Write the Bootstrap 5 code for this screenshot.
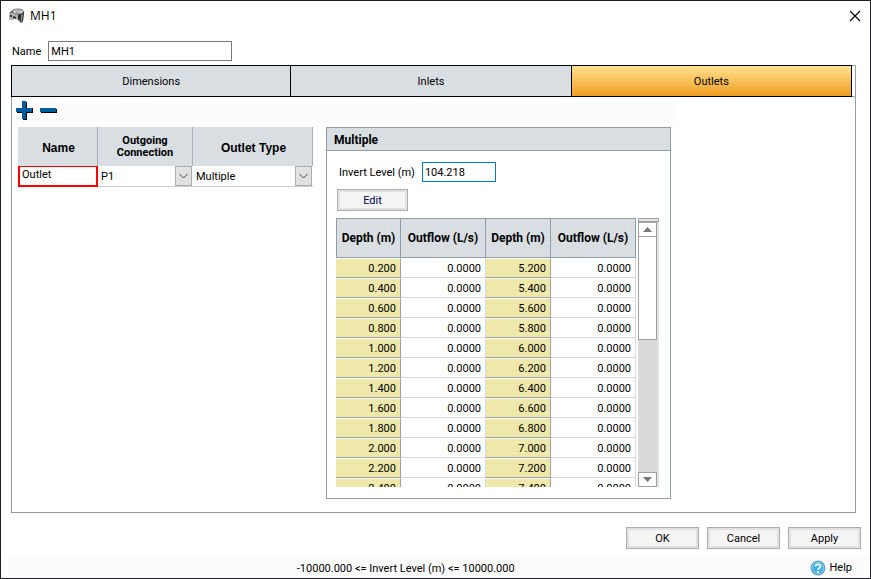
<!DOCTYPE html>
<html lang="en">
<head>
<meta charset="utf-8">
<meta name="viewport" content="width=device-width, initial-scale=1">
<title>MH1</title>
<link href="https://cdn.jsdelivr.net/npm/bootstrap@5.3.0/dist/css/bootstrap.min.css" rel="stylesheet">
<style>
  :root { --line: #929ea5; --head: #d9dee2; --soft: #fcfcfc; }
  body { font: 11px/14px Roboto, "Liberation Sans", Arial, sans-serif; color: #000; background: #fff; }
  .win { height: 100vh; min-height: 400px; border: 1px solid #1e1f24; }
  .win-title { height: 29px; padding: 0 9px 0 7px; gap: 5px; }
  .win-title h1 { font: 12px/16px "Open Sans", sans-serif; }
  .win-close { width: 12px; height: 12px; }
  .name-row { padding: 11px 11px 4px; gap: 7px; }
  .name-row label, .level-row label { padding-top: 2px; }
  .field { height: 20px; padding: 0 2px; border: 1px solid #7a7a7a; border-radius: 0; font-size: 11px; line-height: 14px; color: #000; background: #fff; }
  .field-name { width: 184px; }
  .field-level { width: 74px; border-color: #0078d7; }
  .page-frame { min-height: 0; margin: 0 14px 0 10px; border: 1px solid var(--line); border-top: 0; }
  .tab-strip { margin: 0 0 0 -1px; padding-right: 3px; border-top: 1px solid var(--line); border-bottom: 1px solid var(--line); height: 32px; }
  .tab-strip .nav-link { height: 32px; margin: -1px 0 0; padding: 2px 0 0; border: 1px solid #000; border-radius: 0; background: var(--head); color: #000; font-size: 11px; }
  .tab-strip .nav-item + .nav-item .nav-link { border-left: 0; }
  .tab-strip .nav-link.active { background: linear-gradient(#ffe28f, #f09d22); }
  .tools { width: 664px; max-width: 100%; height: 25px; padding: 2px 4px 0; gap: 6px; background: var(--soft); }
  .panes { padding: 5px 6px 13px; gap: 13px; }
  .outlets { width: 295px; table-layout: fixed; border-collapse: separate; border-spacing: 0; }
  .outlets th { height: 39px; padding: 2px 2px 0 4px; background: var(--head); border-right: 1px solid #a9b0b5; font: bold 12px/12px "Liberation Sans", Arial, sans-serif; }
  .outlets th.tight { padding: 0 4px; font: bold 11px/12px Roboto, sans-serif; }
  .outlets td { height: 21px; padding: 0; border-bottom: 1px solid #ccc; }
  .outlets td.bad { border: 2px solid #f00; border-top-width: 1px; vertical-align: top; padding: 1px 0 0 2px; }
  .pick { height: 20px; width: 100%; padding: 1px 20px 0 3px; border: 0; border-radius: 0; color: #000; font-size: 11px; line-height: 14px; appearance: none; background: transparent; }
  .pick-arrow { right: 1px; top: 0; width: 17px; height: 20px; pointer-events: none; background: #e1e1e1; border: 1px solid #adadad; }
  .detail { width: 345px; border: 1px solid var(--line); }
  .detail h2 { height: 23px; padding: 0 7px; margin: 0; background: var(--head); border-bottom: 1px solid var(--line); font: bold 12px/24px Roboto, sans-serif; }
  .level-row { padding: 11px 12px 7px; gap: 7px; }
  .push { height: 22px; padding: 1px 0 0; border: 1px solid #adadad; border-radius: 0; box-shadow: inset 0 0 0 2px #e1e1e1; background: #f4f4f4; color: #000; font-size: 11px; line-height: 14px; }
  .push-edit { width: 71px; margin-left: 10px; color: #000050; }
  .push-main { width: 73px; }
  .curve-wrap { margin: 7px 11px 11px 9px; gap: 2px; }
  .curve { width: 300px; table-layout: fixed; border-collapse: separate; border-spacing: 0; }
  .curve th { height: 40px; padding: 0; background: var(--head); border: 1px solid var(--line); border-left: 0; white-space: nowrap; font-size: 12px; }
  .curve th:first-child { border-left: 1px solid var(--line); }
  .curve td { height: 20px; padding: 2px 4px 0 0; border-right: 1px solid #d5dadf; border-bottom: 1px solid #d5dadf; text-align: right; line-height: 16px; }
  .curve td.depth { padding-top: 1px; background: #eee8aa; border-color: #a0a0a0; border-top: 1px solid #fff; }
  .bar { width: 21px; border-right: 2px solid #e3e3e3; background: #dadada; }
  .bar-top { height: 4px; border: 1px solid #a0a0a0; background: #e3e3e3; margin-right: -2px; }
  .bar-btn { height: 15px; padding: 0; border: 1px solid #a0a0a0; background: #fff; }
  .bar-thumb { height: 103px; border: 1px solid #a0a0a0; background: #fff; border-top: 0; }
  .actions { padding: 14px 9px 7px; gap: 8px; }
  .status { height: 22px; padding: 2px 18px 0 0; background: var(--soft); }
  .status-text { padding-top: 1px; }
  .help { gap: 3px; color: #000; font-size: 11px; }
</style>
<script src="https://cdn.jsdelivr.net/npm/bootstrap@5.3.0/dist/js/bootstrap.bundle.min.js"></script>
</head>
<body>
<main class="win d-flex flex-column overflow-hidden">
  <header class="win-title d-flex align-items-center flex-shrink-0">
    <svg width="17" height="16" viewBox="0 0 17 16" aria-hidden="true">
      <path d="M1 5 6 1h8l2 3-1 9-2 2-3-3-4-2-1 2-4-1z" fill="#666"/>
      <path d="M1 5h4l5 2v5l-4-2-1 2-4-1z" fill="#b5b5b5"/>
      <path d="m10 7 6-3-1 9-2 2-1-4-2 1z" fill="#2b2b2b"/>
      <path d="m13 7 2-1-1 7-1 1z" fill="#8c8c8c"/>
      <ellipse cx="10" cy="3.500" rx="5" ry="2.500" fill="#ddd" stroke="#777"/>
      <path d="m7 3 5 2M9 2l4 1M8 5l3-3" stroke="#999" fill="none"/>
      <path d="M2 8h2M5 9l3 1" stroke="#333" stroke-width="2" fill="none"/>
    </svg>
    <h1 class="m-0 flex-grow-1">MH1</h1>
    <button type="button" class="win-close btn p-0 border-0 d-flex" aria-label="Close">
      <svg width="12" height="12" viewBox="0 0 12 12"><path d="m1 1 10 10M11 1 1 11" stroke="#000" stroke-width="1.100"/></svg>
    </button>
  </header>

  <div class="name-row d-flex align-items-center flex-shrink-0">
    <label for="node-name">Name</label>
    <input id="node-name" class="field field-name" type="text" value="MH1">
  </div>

  <section class="page-frame d-flex flex-column flex-grow-1">
    <ul class="tab-strip nav flex-nowrap flex-shrink-0" role="tablist">
      <li class="nav-item col" role="presentation"><button type="button" class="nav-link w-100" role="tab" aria-selected="false">Dimensions</button></li>
      <li class="nav-item col" role="presentation"><button type="button" class="nav-link w-100" role="tab" aria-selected="false">Inlets</button></li>
      <li class="nav-item col" role="presentation"><button type="button" class="nav-link w-100 active" role="tab" aria-selected="true">Outlets</button></li>
    </ul>
    <div class="tools d-flex align-items-center flex-shrink-0">
      <button type="button" class="btn p-0 border-0 d-flex" aria-label="Add outlet">
        <svg width="18" height="19" viewBox="0 0 18 19"><path d="M7 1h4v6h6v5h-6v7H7v-7H1V7h6z" fill="#000"/><path d="M6 0h4v7h6v4h-6v7H6v-7H0V7h6z" fill="#005a9c"/></svg>
      </button>
      <button type="button" class="btn p-0 border-0 d-flex" aria-label="Remove outlet">
        <svg width="18" height="19" viewBox="0 0 18 19"><path d="M1 8h16v4H1z" fill="#000"/><path d="M0 7h16v4H0z" fill="#005a9c"/></svg>
      </button>
    </div>

    <div class="panes d-flex flex-grow-1 overflow-hidden">
      <div class="flex-shrink-0">
        <table class="outlets">
          <colgroup><col width="80"><col width="95"><col width="120"></colgroup>
          <thead><tr class="text-center">
            <th scope="col">Name</th><th scope="col" class="tight">Outgoing Connection</th><th scope="col">Outlet Type</th>
          </tr></thead>
          <tbody><tr>
            <td class="bad">Outlet</td>
            <td><div class="position-relative">
              <select class="pick" aria-label="Outgoing Connection"><option>P1</option></select>
              <span class="pick-arrow position-absolute d-flex align-items-center justify-content-center"><svg width="9" height="6" viewBox="0 0 9 6"><path d="m.5 1 4 4 4-4" fill="none" stroke="#444"/></svg></span>
            </div></td>
            <td><div class="position-relative">
              <select class="pick" aria-label="Outlet Type"><option>Multiple</option></select>
              <span class="pick-arrow position-absolute d-flex align-items-center justify-content-center"><svg width="9" height="6" viewBox="0 0 9 6"><path d="m.5 1 4 4 4-4" fill="none" stroke="#444"/></svg></span>
            </div></td>
          </tr></tbody>
        </table>
      </div>

      <section class="detail d-flex flex-column">
        <h2 class="flex-shrink-0">Multiple</h2>
        <div class="level-row d-flex align-items-center">
          <label for="level">Invert Level (m)</label>
          <input id="level" class="field field-level" type="text" value="104.218">
        </div>
        <button type="button" class="btn push push-edit flex-shrink-0">Edit</button>
        <div class="curve-wrap d-flex flex-grow-1 overflow-hidden">
          <div class="overflow-hidden">
            <table class="curve">
              <colgroup><col width="65"><col width="85"><col width="65"><col width="85"></colgroup>
              <thead><tr class="text-center"><th scope="col">Depth (m)</th><th scope="col">Outflow (L/s)</th><th scope="col">Depth (m)</th><th scope="col">Outflow (L/s)</th></tr></thead>
              <tbody>
                <tr><td class="depth">0.200</td><td>0.0000</td><td class="depth">5.200</td><td>0.0000</td></tr>
                <tr><td class="depth">0.400</td><td>0.0000</td><td class="depth">5.400</td><td>0.0000</td></tr>
                <tr><td class="depth">0.600</td><td>0.0000</td><td class="depth">5.600</td><td>0.0000</td></tr>
                <tr><td class="depth">0.800</td><td>0.0000</td><td class="depth">5.800</td><td>0.0000</td></tr>
                <tr><td class="depth">1.000</td><td>0.0000</td><td class="depth">6.000</td><td>0.0000</td></tr>
                <tr><td class="depth">1.200</td><td>0.0000</td><td class="depth">6.200</td><td>0.0000</td></tr>
                <tr><td class="depth">1.400</td><td>0.0000</td><td class="depth">6.400</td><td>0.0000</td></tr>
                <tr><td class="depth">1.600</td><td>0.0000</td><td class="depth">6.600</td><td>0.0000</td></tr>
                <tr><td class="depth">1.800</td><td>0.0000</td><td class="depth">6.800</td><td>0.0000</td></tr>
                <tr><td class="depth">2.000</td><td>0.0000</td><td class="depth">7.000</td><td>0.0000</td></tr>
                <tr><td class="depth">2.200</td><td>0.0000</td><td class="depth">7.200</td><td>0.0000</td></tr>
                <tr><td class="depth">2.400</td><td>0.0000</td><td class="depth">7.400</td><td>0.0000</td></tr>
              </tbody>
            </table>
          </div>
          <div class="bar d-flex flex-column flex-shrink-0">
            <div class="bar-top flex-shrink-0"></div>
            <button type="button" class="bar-btn d-flex align-items-center justify-content-center flex-shrink-0" aria-label="Scroll up"><svg width="9" height="5" viewBox="0 0 9 5"><path d="M0 5h9L4.500 0z" fill="#777"/></svg></button>
            <div class="bar-thumb"></div>
            <button type="button" class="bar-btn d-flex align-items-center justify-content-center mt-auto flex-shrink-0" aria-label="Scroll down"><svg width="9" height="5" viewBox="0 0 9 5"><path d="M0 0h9L4.500 5z" fill="#777"/></svg></button>
          </div>
        </div>
      </section>
    </div>
  </section>

  <div class="actions d-flex justify-content-end flex-shrink-0">
    <button type="button" class="btn push push-main">OK</button>
    <button type="button" class="btn push push-main">Cancel</button>
    <button type="button" class="btn push push-main">Apply</button>
  </div>
  <footer class="status d-flex align-items-center flex-shrink-0">
    <div class="status-text flex-grow-1 text-center">-10000.000 &lt;= Invert Level (m) &lt;= 10000.000</div>
    <a href="#" class="help d-flex align-items-center text-decoration-none">
      <svg width="16" height="16" viewBox="0 0 16 16" aria-hidden="true"><circle cx="8" cy="8" r="7" fill="#3fb0e6" stroke="#5d93b0"/><circle cx="8" cy="8" r="5.800" fill="none" stroke="#8fd3f3"/><path d="M5.500 6.500C5.500 3.500 10.700 3.700 10.500 6.500 10.400 8 8 8 8 9.800M8 11v1.700" fill="none" stroke="#fff" stroke-width="1.800"/></svg>
      <span>Help</span>
    </a>
  </footer>
</main>
</body>
</html>
